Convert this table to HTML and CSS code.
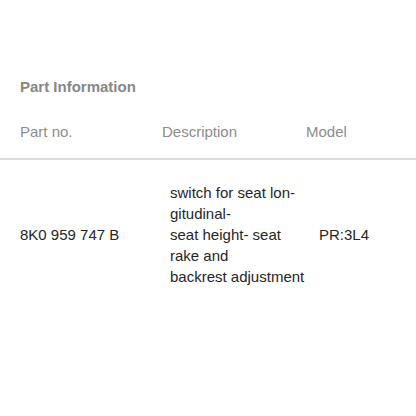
FILE: index.html
```html
<!DOCTYPE html>
<html lang="en">
<head>
    <meta charset="UTF-8">
    <meta name="viewport" content="width=device-width, initial-scale=1.0">
    <title>Part Information</title>
    <link rel="stylesheet" href="styles.css">
</head>
<body>
    <div class="part-info">
        <h2 class="title">Part Information</h2>

        <div class="head-row">
            <div class="col-part">Part no.</div>
            <div class="col-desc">Description</div>
            <div class="col-model">Model</div>
        </div>

        <div class="body-row">
            <div class="cell-part">8K0 959 747 B</div>
            <div class="cell-desc">
                switch for seat lon-<br>
                gitudinal-<br>
                seat height- seat<br>
                rake and<br>
                backrest adjustment
            </div>
            <div class="cell-model">PR:3L4</div>
        </div>
    </div>
</body>
</html>
```

FILE: styles.css
```css
body {
    margin: 0;
    background: #fff;
    font-family: "Liberation Sans", Arial, sans-serif;
    font-size: 15px;
}

.title {
    margin: 0;
    padding: 78px 20px 0;
    font-size: 15px;
    line-height: 18px;
    font-weight: bold;
    color: #878787;
}

/* header of the table */
.head-row {
    display: grid;
    grid-template-columns: 142px 144px 1fr;
    padding: 27px 20px 17px;
    line-height: 18px;
    color: #8c8c8c;
    border-bottom: 2px solid #dcdcdc;
}

/* the part row */
.body-row {
    display: grid;
    grid-template-columns: 150px 149px 1fr;
    align-items: center;
    padding: 22px 20px 20px;
    color: #262626;
}

.cell-desc {
    line-height: 21px;
}
```
